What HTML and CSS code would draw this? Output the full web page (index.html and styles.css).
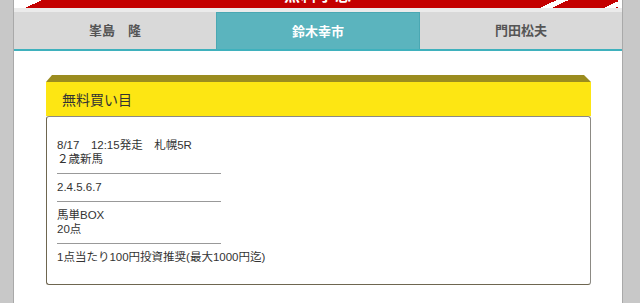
FILE: index.html
```html
<!DOCTYPE html>
<html lang="ja">
<head>
    <meta charset="UTF-8">
    <meta name="viewport" content="width=device-width, initial-scale=1.0">
    <title>無料予想</title>
    <link rel="stylesheet" href="styles.css">
</head>
<body>

    <div class="page">
        <div class="banner">
            <span class="banner-text">無料予想</span>
        </div>

        <ul class="tabs">
            <li class="tab">峯島　隆</li>
            <li class="tab active">鈴木幸市</li>
            <li class="tab">門田松夫</li>
        </ul>

        <div class="section">
            <div class="head-top"></div>
            <h3 class="head">無料買い目</h3>
            <div class="box">
                <p>8/17　12:15発走　札幌5R<br>２歳新馬</p>
                <hr>
                <p>2.4.5.6.7</p>
                <hr>
                <p>馬単BOX<br>20点</p>
                <hr>
                <p>1点当たり100円投資推奨(最大1000円迄)</p>
            </div>
        </div>
    </div>

</body>
</html>
```

FILE: styles.css
```css
body {
    margin: 0;
    background-color: #c8c8c8;
    font-family: "Noto Sans CJK JP", "Noto Sans", sans-serif;
    color: #333;
}
.page {
    margin-top: -34px;
    margin-left: 13px;
    width: 608px;
    height: 337px;
    background: #fff;
    border-left: 1px solid #a9a9a9;
    border-right: 1px solid #a9a9a9;
}
.banner {
    position: relative;
    overflow: hidden;
    height: 42px;
    margin: 0 4px;
    background: #c40000;
    text-align: center;
}
.banner::before,
.banner::after {
    content: "";
    position: absolute;
    top: 0;
    bottom: 0;
}
.banner::before {
    left: 0;
    width: 30px;
    background: linear-gradient(155deg, #fff 0 41px, transparent 41px);
}
.banner::after {
    right: 0;
    width: 90px;
    background: linear-gradient(155deg, transparent 0 43px, #fff 43px 48px, transparent 48px 70px, #fff 70px 75px, transparent 75px);
}
.banner-text {
    display: inline-block;
    padding-top: 20px;
    font-size: 16px;
    line-height: 16px;
    font-weight: bold;
    color: #fff;
    letter-spacing: 1px;
}
.tabs {
    display: flex;
    margin: 0;
    padding: 0;
    list-style: none;
    border-top: 4px solid #ebebeb;
    border-bottom: 2px solid #3fb1bd;
    background: #d9d9d9;
}
.tab {
    flex: 1;
    height: 37px;
    line-height: 36px;
    text-align: center;
    font-size: 13px;
    font-weight: bold;
    color: #555;
    box-sizing: border-box;
}
.tab.active {
    background: #5bb4be;
    border: 1px solid #4aa8b3;
    border-bottom: none;
    color: #fff;
}
.section {
    padding: 24px 31px 0 32px;
}
.head-top {
    height: 0;
    border-bottom: 7px solid #9b8c1f;
    border-left: 6px solid transparent;
    border-right: 7px solid transparent;
}
.head {
    margin: 0;
    height: 34px;
    line-height: 34px;
    padding-left: 16px;
    background: #fde613;
    font-size: 14px;
    font-weight: normal;
    color: #333;
}
.box {
    padding: 21px 10px 20px;
    border: 1px solid #8c8a84;
    border-left-color: #6e6650;
    border-bottom-color: #6e6650;
    border-radius: 3px;
    font-family: "Liberation Sans", "Noto Sans CJK JP", sans-serif;
    font-size: 11.5px;
    line-height: 14px;
    color: #333;
}
.box p {
    margin: 0;
}
.box hr {
    width: 164px;
    margin: 7px 0 6px;
    border: none;
    border-top: 1px solid #999;
}
```
